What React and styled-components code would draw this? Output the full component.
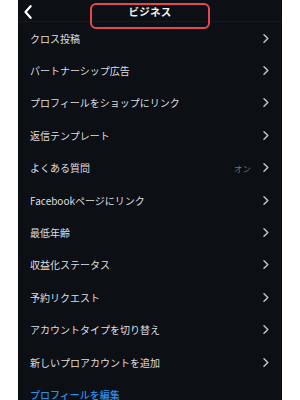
import React from 'react'
import styled, { createGlobalStyle } from 'styled-components'

const GlobalStyle = createGlobalStyle`
  html, body {
    margin: 0;
    padding: 0;
    background: #ffffff;
    overflow: hidden;
  }
  body {
    font-family: "Noto Sans CJK JP", "Noto Sans", sans-serif;
  }
`

const items = [
  { label: 'クロス投稿' },
  { label: 'パートナーシップ広告' },
  { label: 'プロフィールをショップにリンク' },
  { label: '返信テンプレート' },
  { label: 'よくある質問', value: 'オン' },
  { label: 'Facebookページにリンク' },
  { label: '最低年齢' },
  { label: '収益化ステータス' },
  { label: '予約リクエスト' },
  { label: 'アカウントタイプを切り替え' },
  { label: '新しいプロアカウントを追加' },
]

function ChevronRight() {
  return (
    <svg width="6" height="9" viewBox="0 0 6 9">
      <path d="M1 0.8 L4.8 4.5 L1 8.2" fill="none" stroke="#c9cacc" strokeWidth="1.4" strokeLinecap="round" strokeLinejoin="round" />
    </svg>
  )
}

function ChevronLeft() {
  return (
    <svg width="8" height="14" viewBox="0 0 8 14">
      <path d="M6.6 1.2 L1.5 7 L6.6 12.8" fill="none" stroke="#ffffff" strokeWidth="2.2" strokeLinecap="round" strokeLinejoin="round" />
    </svg>
  )
}

function App() {
  return (
    <>
      <GlobalStyle />
      <Page>
        <Panel>
          <Header>
            <Back><ChevronLeft /></Back>
            <Title>ビジネス</Title>
            <Highlight />
          </Header>
          <List>
            {items.map((item) => (
              <Row key={item.label}>
                <Label>{item.label}</Label>
                <Right>
                  {item.value && <Value>{item.value}</Value>}
                  <ChevronRight />
                </Right>
              </Row>
            ))}
            <Row>
              <Link>プロフィールを編集</Link>
            </Row>
          </List>
        </Panel>
      </Page>
    </>
  )
}

export default App

const Page = styled.div`
  width: 300px;
  height: 400px;
  display: flex;
  justify-content: center;
  background: #ffffff;
`

const Panel = styled.div`
  width: 264px;
  height: 400px;
  background: #0c0f14;
  display: flex;
  flex-direction: column;
  overflow: hidden;
`

const Header = styled.div`
  position: relative;
  height: 22px;
  flex-shrink: 0;
  display: flex;
  align-items: center;
  justify-content: center;
  padding-top: 2px;
  box-sizing: border-box;
  border-bottom: 1px solid #15181d;
`

const Back = styled.div`
  position: absolute;
  left: 6px;
  top: 5px;
  display: flex;
`

const Title = styled.div`
  color: #f2f2f2;
  font-size: 10.5px;
  font-weight: 700;
  letter-spacing: 0.2px;
`

const Highlight = styled.div`
  position: absolute;
  left: 72px;
  top: 3px;
  width: 120px;
  height: 26px;
  box-sizing: border-box;
  border: 2px solid #e5484d;
  border-radius: 6px;
  z-index: 2;
`

const List = styled.div`
  display: flex;
  flex-direction: column;
`

const Row = styled.div`
  height: 32.4px;
  flex-shrink: 0;
  display: flex;
  align-items: center;
  justify-content: space-between;
  padding: 0 13px 0 12px;
`

const Label = styled.span`
  color: #dedfe1;
  font-size: 10px;
  white-space: nowrap;
`

const Right = styled.div`
  display: flex;
  align-items: center;
  gap: 12px;
`

const Value = styled.span`
  color: #70737a;
  font-size: 8.5px;
`

const Link = styled.span`
  color: #2f8ee6;
  font-size: 10px;
  font-weight: 500;
`
